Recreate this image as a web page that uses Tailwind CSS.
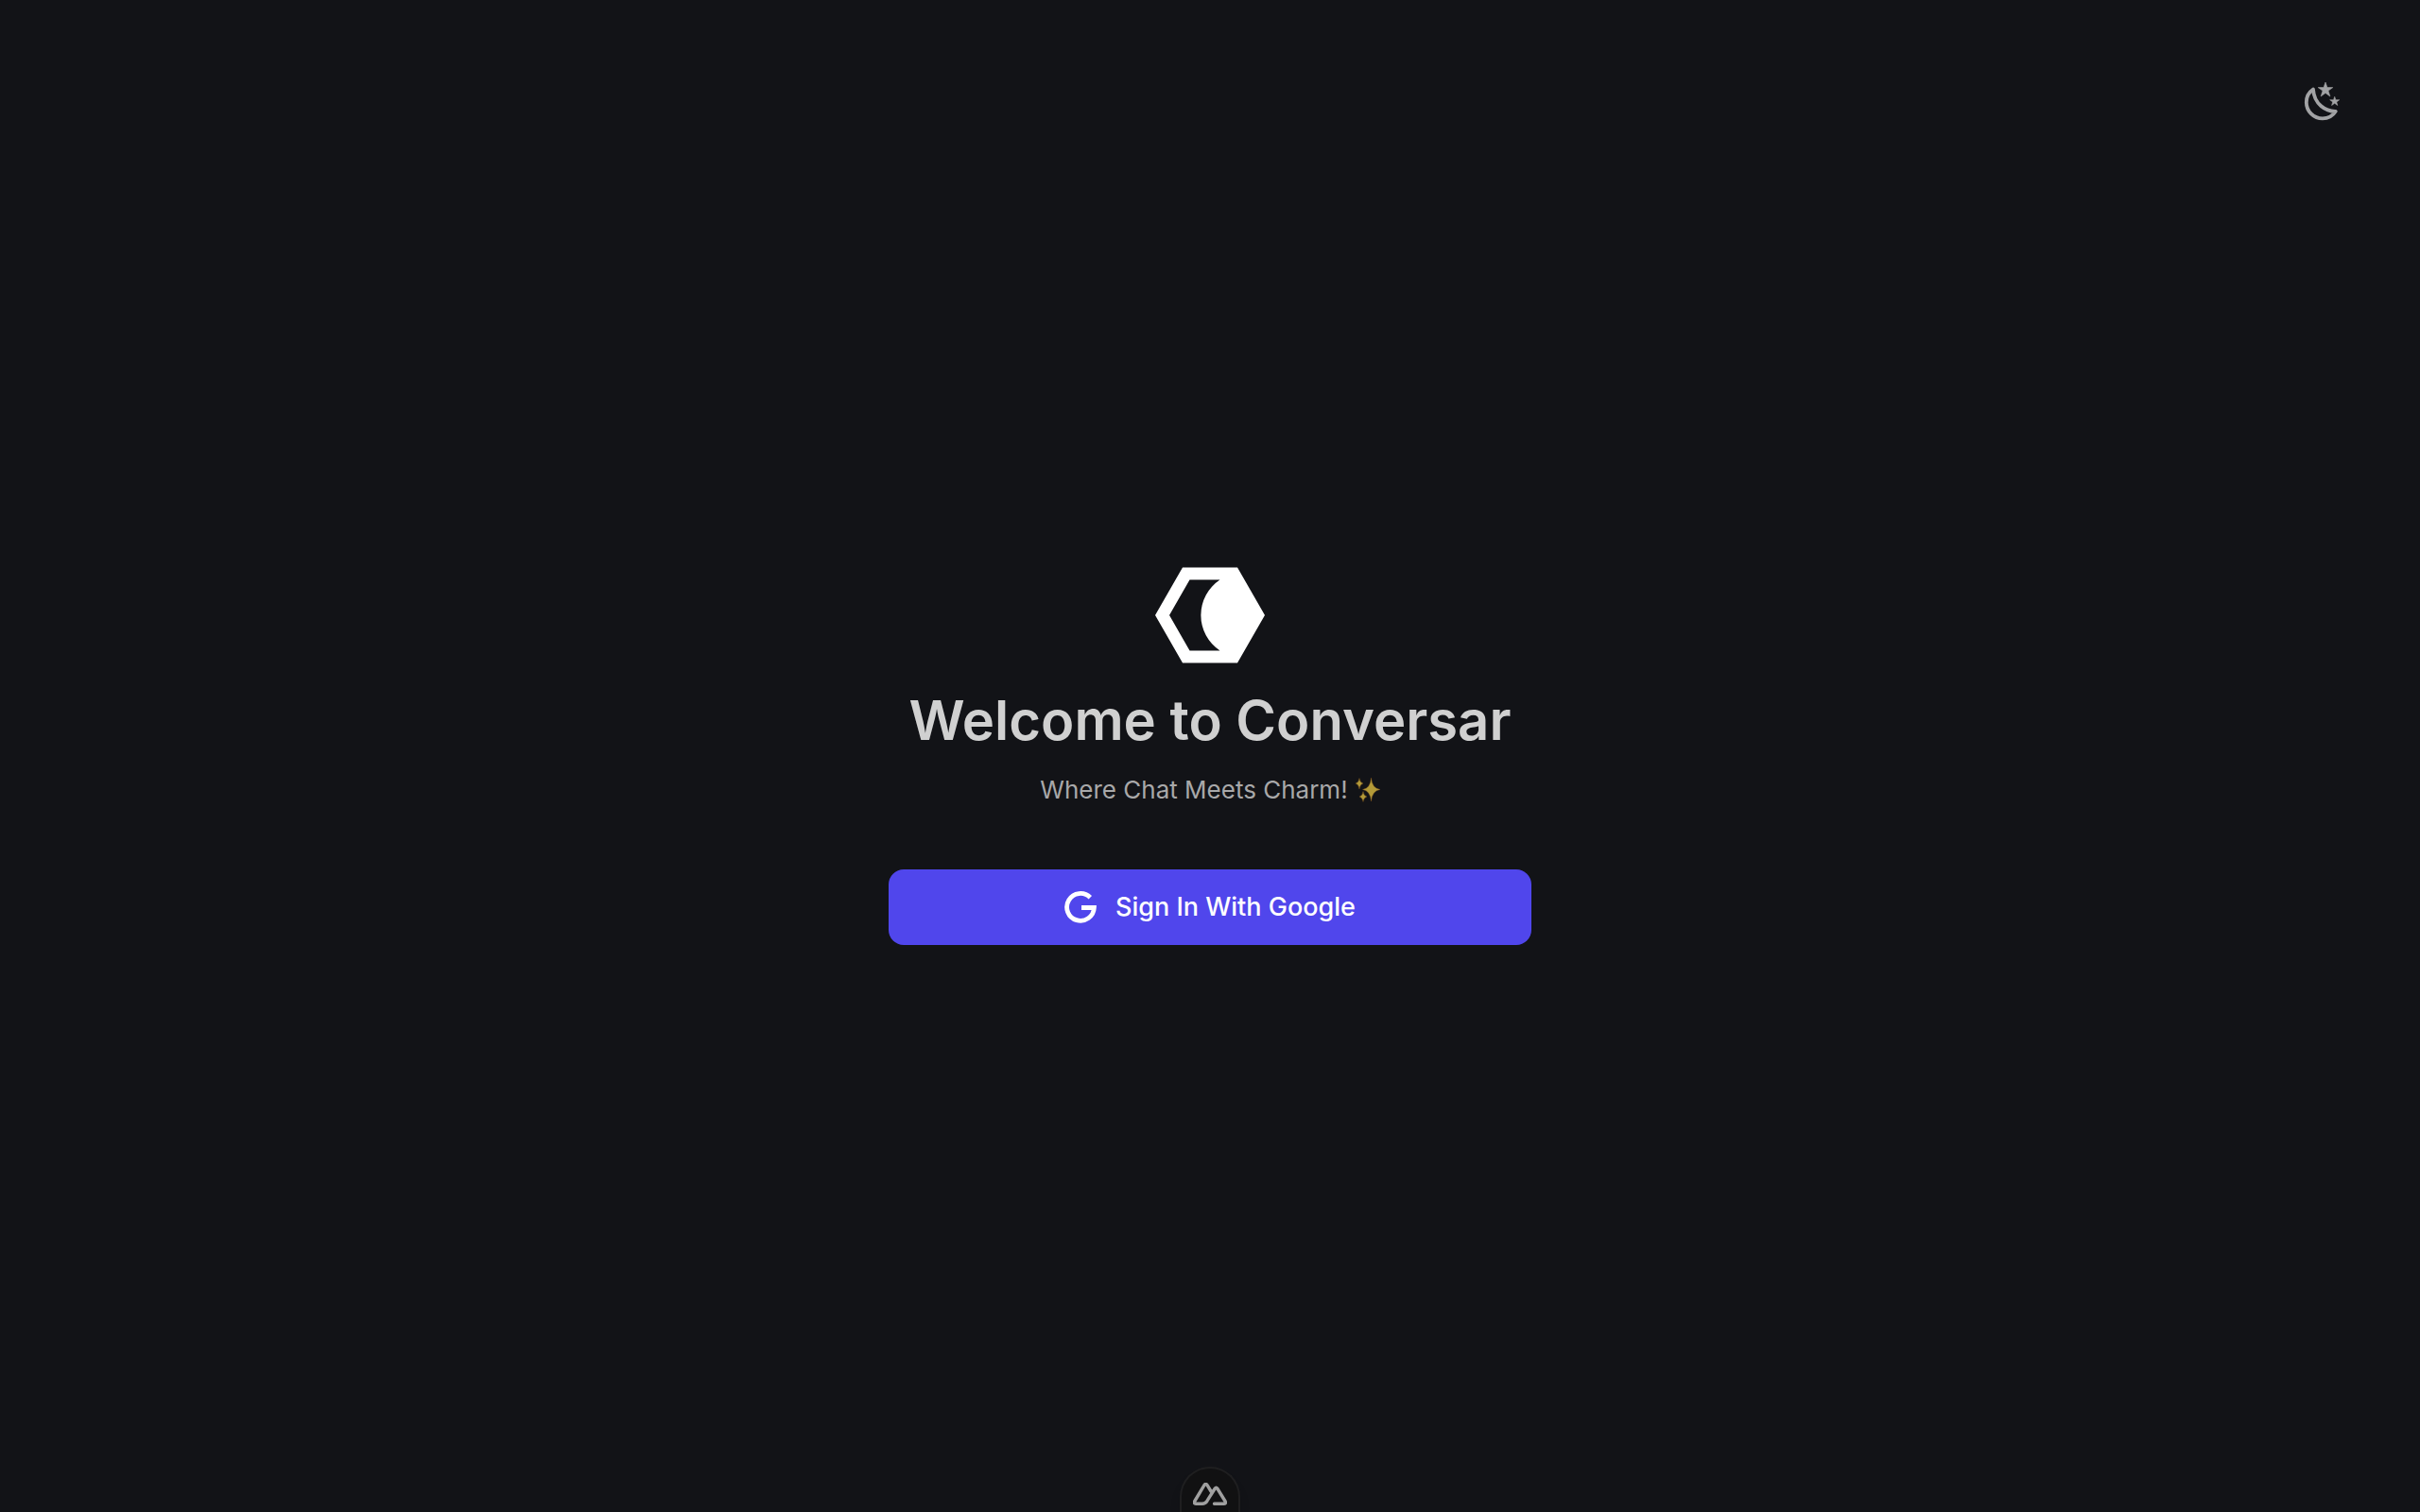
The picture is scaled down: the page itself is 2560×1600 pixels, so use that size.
<!DOCTYPE html>
<html lang="en">
<head>
<meta charset="utf-8">
<meta name="viewport" content="width=device-width, initial-scale=1">
<title>Conversar</title>
<script src="https://cdn.jsdelivr.net/npm/@tailwindcss/browser@4"></script>
</head>
<body class="relative flex min-h-screen flex-col overflow-hidden bg-[#121317] font-['Inter',sans-serif] text-[#d0d0d0]">
<button type="button" aria-label="Toggle dark mode" class="absolute top-[70px] right-[60px] text-[#a2a3a5]">
<svg class="h-[75px] w-[90px]" viewBox="0 0 90 75" fill="none">
<path d="M37 24.500C32.500 27.500 29.800 32.500 29.800 38.200C29.800 47.700 37.500 55.400 47 55.400C53.200 55.400 58 52.200 60.800 47.800C50.500 48 38 40.500 37 24.500Z" stroke="currentColor" stroke-width="3.800" stroke-linejoin="round"/>
<path d="M50 17L51.900 22.600H57.800L53 26.100L54.900 32L50 28.400L45.100 32L47 26.100L42.200 22.600H48.100ZM59.700 32.300L60.900 35.700H64.700L61.700 37.900L62.800 41.500L59.700 39.300L56.600 41.500L57.700 37.900L54.700 35.700H58.500Z" fill="currentColor" stroke="currentColor" stroke-width=".600"/>
</svg>
</button>
<main class="flex flex-1 flex-col items-center justify-center">
<svg class="h-[102px] w-[116px]" viewBox="0 0 116 102" role="img" aria-label="Conversar logo">
<path fill="#fff" fill-rule="evenodd" d="M0 51L29 .500H87L116 51L87 101.500H29ZM15 51L36.500 88.500H68.500A45 45 0 0 1 68.500 13.500H36.500Z"/>
</svg>
<h1 class="mt-5 text-[58px] leading-[80px] font-semibold">Welcome to Conversar</h1>
<p class="mt-[14px] flex items-center gap-2 text-[26px] leading-10 text-[#a8a8a9]">Where Chat Meets Charm!
<svg class="size-[26px]" viewBox="0 0 26 26" role="img" aria-label="Sparkles">
<g fill="#b39a38" stroke="#80531f" stroke-width=".400">
<path d="M16.500 0Q17.300 11.200 26 12.500Q17.300 13.800 16.500 25Q15.700 13.800 7.500 12.500Q15.700 11.200 16.500 0Z"/>
<path d="M4 .500Q4.600 5 8 6Q4.600 7 4 12Q3.400 7 0 6Q3.400 5 4 .500Z"/>
<path d="M8 14.500Q8.600 19 12 20Q8.600 21 8 25.500Q7.400 21 4 20Q7.400 19 8 14.500Z"/>
</g>
</svg>
</p>
<button type="button" class="mt-16 flex h-20 w-full max-w-[680px] items-center justify-center gap-5 rounded-2xl bg-[#5046ec] text-[27px] font-medium text-white">
<svg class="size-[34px]" viewBox="0 0 34 34" fill="none" aria-hidden="true">
<path d="M27.300 6.800A14.400 14.400 0 1 0 31.400 17.500H18" stroke="currentColor" stroke-width="4.800"/>
</svg>
<span>Sign In With Google</span>
</button>
</main>
<button type="button" aria-label="Open Nuxt DevTools" class="absolute bottom-0 left-1/2 flex h-12 w-16 -translate-x-1/2 items-center justify-center rounded-t-full border-2 border-b-0 border-[#1f1f20] bg-[#111112] pt-2 text-[#a0a0a0] shadow-lg">
<svg class="h-6 w-9" viewBox="32 29 36 24" fill="none">
<path d="M51 38L46.800 31.200Q45.500 29.500 44.200 31.200L33.800 48.500Q32.500 51.200 35 51.200H42Q45 51.200 47 48.200L55.300 35Q56.500 33.300 57.700 35L66 48.500Q67.500 51.200 65 51.200H54.500" stroke="currentColor" stroke-width="3.400" stroke-linecap="round" stroke-linejoin="round"/>
</svg>
</button>
</body>
</html>
